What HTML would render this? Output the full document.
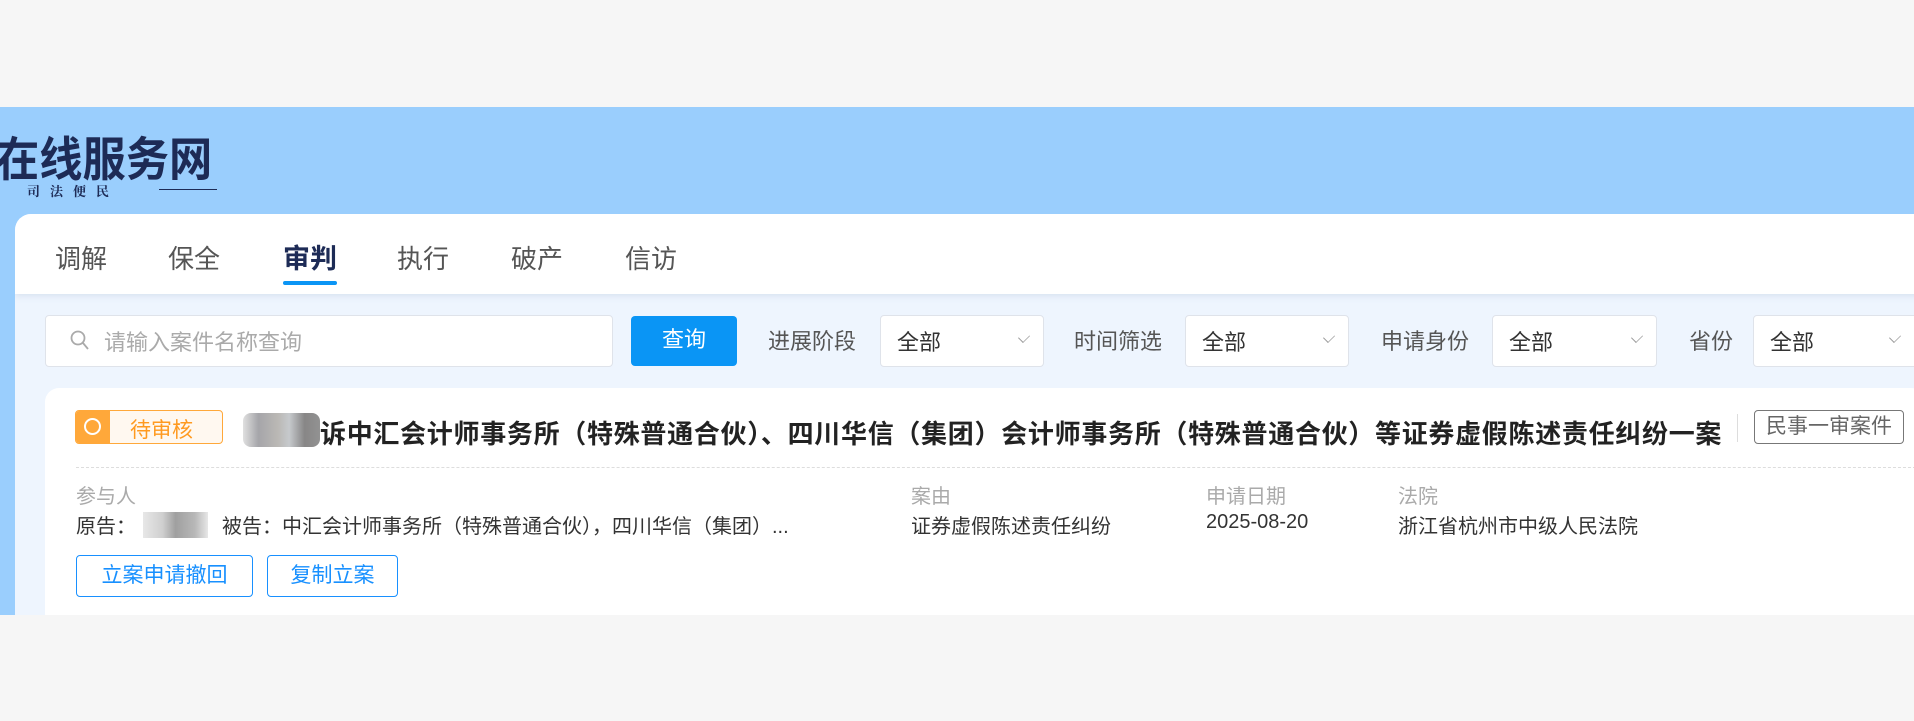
<!DOCTYPE html>
<html><head><meta charset="utf-8"><style>
*{margin:0;padding:0;box-sizing:border-box}
body{width:1914px;height:721px;background:#f6f6f6;position:relative;overflow:hidden;font-family:"Liberation Sans","Noto Sans CJK SC",sans-serif;color:#333}
.a{position:absolute;white-space:nowrap}
.sel{position:absolute;top:315px;height:52px;background:#fff;border:1px solid #dfe3ea;border-radius:4px}
.sel span{position:absolute;left:16px;top:9px;font-size:22px;color:#333}
.sel i{position:absolute;right:14px;top:16px;width:10px;height:10px;border-right:1.5px solid #999;border-bottom:1.5px solid #999;transform:rotate(45deg) scaleX(.7)}
.lbl{position:absolute;top:324px;font-size:22px;color:#555}
.g{font-size:20px;color:#aaa;top:480px}
.v{font-size:20px;color:#333;top:510px}
.btn{position:absolute;top:555px;height:42px;border:1.5px solid #1890ff;border-radius:4px;color:#1890ff;font-size:21px;text-align:center;line-height:39px;background:#fff}
</style></head><body>
<div class="a" style="left:0;top:107px;width:1914px;height:508px;background:#9acefd"></div>
<div class="a" style="left:-4px;top:121px;font-size:47px;font-weight:bold;color:#1d2b56;transform:scaleX(0.92);transform-origin:left top">在线服务网</div>
<div class="a" style="left:27px;top:181px;font-size:13px;font-weight:bold;color:#1d2b56;letter-spacing:10px;font-family:'Noto Serif CJK SC',serif">司法便民</div>
<div class="a" style="left:159px;top:189px;width:58px;height:1px;background:#1d2b56"></div>
<div class="a" style="left:15px;top:214px;width:1920px;height:401px;background:#eef5fe;border-top-left-radius:16px;overflow:hidden">
 <div style="position:absolute;left:0;top:0;width:100%;height:80px;background:#fff;box-shadow:0 2px 6px rgba(150,170,200,.25)"></div>
</div>
<div class="a" style="left:55px;top:239px;font-size:26px;color:#555">调解</div>
<div class="a" style="left:168px;top:239px;font-size:26px;color:#555">保全</div>
<div class="a" style="left:283px;top:237px;font-size:27px;color:#1d2b56;font-weight:bold">审判</div>
<div class="a" style="left:397px;top:239px;font-size:26px;color:#555">执行</div>
<div class="a" style="left:511px;top:239px;font-size:26px;color:#555">破产</div>
<div class="a" style="left:625px;top:239px;font-size:26px;color:#555">信访</div>
<div class="a" style="left:283px;top:281px;width:54px;height:4px;border-radius:2px;background:#0a95f5"></div>

<div class="sel" style="left:45px;width:568px"><svg style="position:absolute;left:24px;top:14px" width="20" height="22" viewBox="0 0 20 22"><circle cx="8" cy="8" r="6.5" fill="none" stroke="#aaa" stroke-width="1.8"/><path d="M13 13l5 6" stroke="#aaa" stroke-width="1.8"/></svg><span style="left:58px;color:#aaa">请输入案件名称查询</span></div>
<div class="a" style="left:631px;top:316px;width:106px;height:50px;background:#0a95f5;border-radius:4px;color:#fff;font-size:22px;text-align:center;line-height:48px">查询</div>
<div class="lbl" style="left:768px">进展阶段</div>
<div class="sel" style="left:880px;width:164px"><span>全部</span><i></i></div>
<div class="lbl" style="left:1074px">时间筛选</div>
<div class="sel" style="left:1185px;width:164px"><span>全部</span><i></i></div>
<div class="lbl" style="left:1381px">申请身份</div>
<div class="sel" style="left:1492px;width:165px"><span>全部</span><i></i></div>
<div class="lbl" style="left:1689px">省份</div>
<div class="sel" style="left:1753px;width:170px"><span>全部</span><i style="right:22px"></i></div>

<div class="a" style="left:45px;top:388px;width:1880px;height:240px;background:#fff;border-radius:14px"></div>
<div class="a" style="left:75px;top:410px;width:148px;height:34px;border:1.5px solid #ffa83a;border-radius:4px;background:#fff8f0;overflow:hidden">
 <div style="position:absolute;left:0;top:0;width:34px;height:100%;background:#ffa83a"></div>
 <div style="position:absolute;left:8px;top:7px;width:17px;height:17px;border:2px solid #fff;border-radius:50%"></div>
 <div style="position:absolute;left:54px;top:3px;font-size:21px;color:#ff9a20">待审核</div>
</div>
<div class="a" style="left:243px;top:413px;width:77px;height:34px;border-radius:8px;background:linear-gradient(90deg,#d8d8d8,#8f8f94 20%,#a9a6a2 45%,#b8bcc0 60%,#6a6868 80%,#777 100%);opacity:.8"></div>
<div class="a" style="left:320px;top:414px;font-size:26px;font-weight:bold;color:#222;letter-spacing:0.7px">诉中汇会计师事务所（特殊普通合伙）、四川华信（集团）会计师事务所（特殊普通合伙）等证券虚假陈述责任纠纷一案</div>
<div class="a" style="left:1737px;top:414px;width:1px;height:28px;background:#ddd"></div>
<div class="a" style="left:1754px;top:410px;width:150px;height:34px;border:1.5px solid #777;border-radius:4px;font-size:21px;color:#666;text-align:center;line-height:31px">民事一审案件</div>
<div class="a" style="left:76px;top:467px;width:1850px;border-top:1.5px dashed #ddd"></div>
<div class="a g" style="left:76px">参与人</div>
<div class="a g" style="left:911px">案由</div>
<div class="a g" style="left:1206px">申请日期</div>
<div class="a g" style="left:1398px">法院</div>
<div class="a v" style="left:76px">原告：</div>
<div class="a" style="left:143px;top:512px;width:65px;height:26px;background:linear-gradient(90deg,#ddd,#bbb 30%,#777 50%,#999 80%,#ddd);opacity:.7"></div>
<div class="a v" style="left:222px">被告：中汇会计师事务所（特殊普通合伙），四川华信（集团）...</div>
<div class="a v" style="left:911px">证券虚假陈述责任纠纷</div>
<div class="a v" style="left:1206px;top:511px">2025-08-20</div>
<div class="a v" style="left:1398px">浙江省杭州市中级人民法院</div>
<div class="btn" style="left:76px;width:177px">立案申请撤回</div>
<div class="btn" style="left:267px;width:131px">复制立案</div>
<div class="a" style="left:0;top:615px;width:1914px;height:106px;background:#f6f6f6"></div>
</body></html>
